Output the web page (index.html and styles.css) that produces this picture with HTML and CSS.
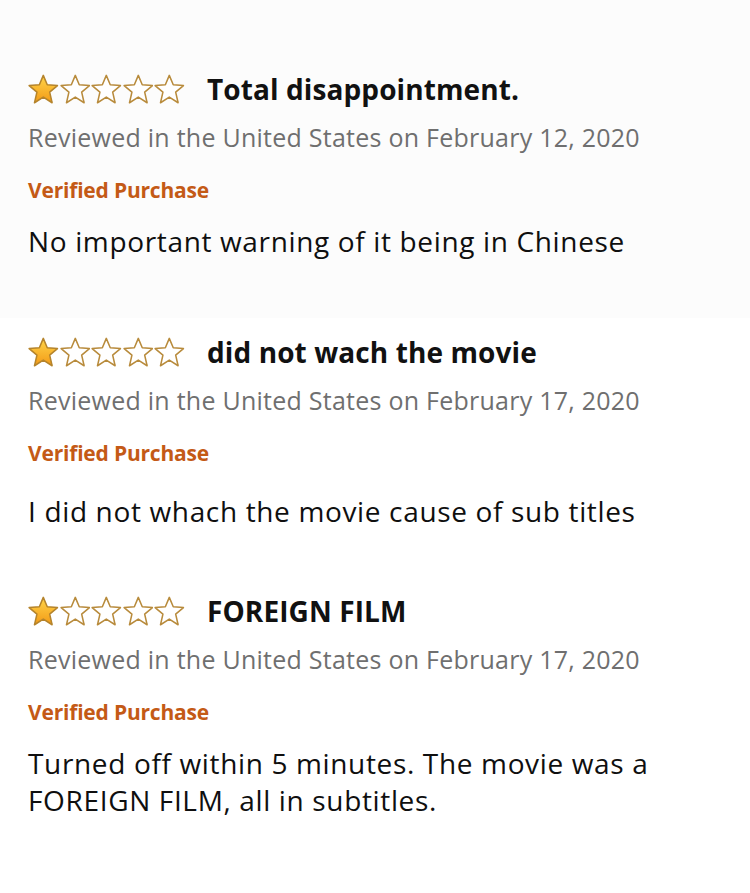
FILE: index.html
```html
<!DOCTYPE html>
<html>
<head>
<meta charset="utf-8">
<link rel="stylesheet" href="styles.css">
</head>
<body>
<svg width="0" height="0" class="defs">
  <defs>
    <linearGradient id="gold" x1="0" y1="0" x2="0" y2="1">
      <stop offset="0" stop-color="#ffd54a"/>
      <stop offset="1" stop-color="#f39a16"/>
    </linearGradient>
    <polygon id="star" points="12,0.9 15.1,8.3 23.1,8.9 17,14.1 18.9,22.4 12,18 5.1,22.4 7,14.1 0.9,8.9 8.9,8.3"/>
  </defs>
</svg>

<section class="review review-1">
  <div class="head">
    <div class="stars">
      <svg viewBox="0 0 24 24" class="star"><use href="#star" class="full"/></svg>
      <svg viewBox="0 0 24 24" class="star"><use href="#star" class="empty"/></svg>
      <svg viewBox="0 0 24 24" class="star"><use href="#star" class="empty"/></svg>
      <svg viewBox="0 0 24 24" class="star"><use href="#star" class="empty"/></svg>
      <svg viewBox="0 0 24 24" class="star"><use href="#star" class="empty"/></svg>
    </div>
    <h2 class="title">Total disappointment.</h2>
  </div>
  <p class="date">Reviewed in the United States on February 12, 2020</p>
  <p class="verified">Verified Purchase</p>
  <p class="body">No important warning of it being in Chinese</p>
</section>

<section class="review review-2">
  <div class="head">
    <div class="stars">
      <svg viewBox="0 0 24 24" class="star"><use href="#star" class="full"/></svg>
      <svg viewBox="0 0 24 24" class="star"><use href="#star" class="empty"/></svg>
      <svg viewBox="0 0 24 24" class="star"><use href="#star" class="empty"/></svg>
      <svg viewBox="0 0 24 24" class="star"><use href="#star" class="empty"/></svg>
      <svg viewBox="0 0 24 24" class="star"><use href="#star" class="empty"/></svg>
    </div>
    <h2 class="title">did not wach the movie</h2>
  </div>
  <p class="date">Reviewed in the United States on February 17, 2020</p>
  <p class="verified">Verified Purchase</p>
  <p class="body">I did not whach the movie cause of sub titles</p>
</section>

<section class="review review-3">
  <div class="head">
    <div class="stars">
      <svg viewBox="0 0 24 24" class="star"><use href="#star" class="full"/></svg>
      <svg viewBox="0 0 24 24" class="star"><use href="#star" class="empty"/></svg>
      <svg viewBox="0 0 24 24" class="star"><use href="#star" class="empty"/></svg>
      <svg viewBox="0 0 24 24" class="star"><use href="#star" class="empty"/></svg>
      <svg viewBox="0 0 24 24" class="star"><use href="#star" class="empty"/></svg>
    </div>
    <h2 class="title">FOREIGN FILM</h2>
  </div>
  <p class="date">Reviewed in the United States on February 17, 2020</p>
  <p class="verified">Verified Purchase</p>
  <p class="body">Turned off within 5 minutes. The movie was a FOREIGN FILM, all in subtitles.</p>
</section>
</body>
</html>
```

FILE: styles.css
```css
* { box-sizing: border-box; }
html, body {
  margin: 0;
  padding: 0;
  background: #ffffff;
}
body {
  width: 750px;
  font-family: "Open Sans", "Noto Sans", sans-serif;
  color: #111111;
}
.defs { position: absolute; width: 0; height: 0; }
p, h2 { margin: 0; }

.review {
  padding-left: 28px;
  padding-right: 20px;
}
.review-1 {
  background: #fcfcfc;
  padding-top: 72px;
  height: 318px;
}
.review-2 { padding-top: 17px; }
.review-3 { padding-top: 64px; }

.head {
  display: flex;
  align-items: center;
  height: 34px;
}
.stars {
  display: flex;
  gap: 1px;
  width: 157px;
  margin-right: 22px;
}
.star {
  width: 31px;
  height: 31px;
  display: block;
}
.full {
  fill: url(#gold);
  stroke: #b5842c;
  stroke-width: 1.2;
  stroke-linejoin: round;
}
.empty {
  fill: #ffffff;
  stroke: #b88b3c;
  stroke-width: 1.2;
  stroke-linejoin: round;
}
.title {
  font-size: 28px;
  font-weight: 700;
  line-height: 34px;
  color: #111111;
  letter-spacing: 0.1px;
}
.date {
  margin-top: 14px;
  font-size: 25px;
  line-height: 34px;
  color: #6f6f6f;
  letter-spacing: 0.25px;
}
.verified {
  margin-top: 21px;
  font-size: 21px;
  line-height: 30px;
  font-weight: 700;
  color: #c45a16;
  letter-spacing: -0.2px;
}
.body {
  margin-top: 17px;
  font-size: 28px;
  line-height: 38px;
  color: #0f0f0f;
  letter-spacing: 0.65px;
}
.review-2 .body { margin-top: 24px; }
.review-3 .body { margin-top: 18px; width: 680px; line-height: 37px; }
```
